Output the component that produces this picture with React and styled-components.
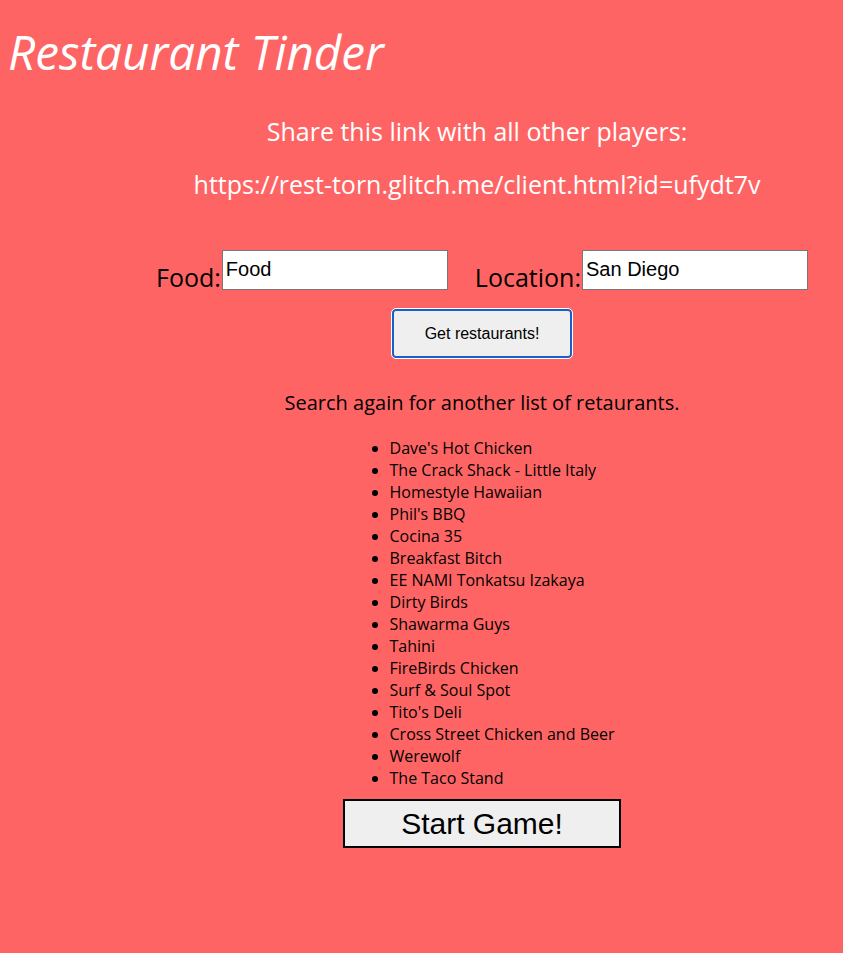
import styled, { createGlobalStyle } from "styled-components";

const GlobalStyle = createGlobalStyle`
  html, body {
    margin: 0;
    background: #ff6464;
  }
  body {
    font-family: "Open Sans", "Noto Sans", sans-serif;
    min-height: 953px;
  }
`;

const Page = styled.div`
  padding: 0 0 40px 8px;
`;

const Title = styled.h1`
  margin: 0;
  padding-top: 22px;
  font-size: 47.6px;
  font-style: italic;
  font-weight: 400;
  line-height: 60px;
  color: #fff;
`;

const Main = styled.main`
  margin-left: 113px;
  display: flex;
  flex-direction: column;
  align-items: center;
`;

const ShareText = styled.p`
  margin: 0;
  font-size: 25px;
  line-height: 30px;
  color: #fff;
  transform: translateX(-5px);
  margin-top: ${(p) => p.$top}px;
`;

const SearchRow = styled.div`
  display: flex;
  align-items: flex-end;
  gap: 27px;
  margin-top: 51px;
`;

const Field = styled.label`
  display: flex;
  align-items: flex-end;
  font-size: 25px;
  line-height: 30px;
  color: #000;
`;

const LabelText = styled.span`
  margin-bottom: -2px;
`;

const Input = styled.input`
  box-sizing: border-box;
  width: 226px;
  height: 40px;
  margin: 0 0 0 1px;
  padding: 0 3px 1px;
  border: 1px solid #777;
  background: #fff;
  font-family: "Liberation Sans", Arial, sans-serif;
  font-size: 20px;
  color: #000;
`;

const GetButton = styled.button`
  box-sizing: border-box;
  width: 180px;
  height: 49px;
  margin-top: 19px;
  border: 2px solid #1a5fc9;
  border-radius: 4px;
  outline: 1px solid #fff;
  background: #efefef;
  font-family: "Liberation Sans", Arial, sans-serif;
  font-size: 16px;
  color: #000;
`;

const Notice = styled.p`
  margin: 32px 0 0;
  font-size: 20px;
  line-height: 26px;
  color: #000;
`;

const List = styled.ul`
  margin: 21px 0 0;
  padding-left: 40px;
  text-align: left;
  font-size: 16px;
  line-height: 22px;
  color: #000;
`;

const Item = styled.li`
  padding-left: 0;
`;

const StartButton = styled.button`
  box-sizing: border-box;
  width: 278px;
  height: 49px;
  margin-top: 10px;
  border: 2px solid #000;
  background: #efefef;
  font-family: "Liberation Sans", Arial, sans-serif;
  font-size: 30px;
  color: #000;
`;

const restaurants = [
  "Dave's Hot Chicken",
  "The Crack Shack - Little Italy",
  "Homestyle Hawaiian",
  "Phil's BBQ",
  "Cocina 35",
  "Breakfast Bitch",
  "EE NAMI Tonkatsu Izakaya",
  "Dirty Birds",
  "Shawarma Guys",
  "Tahini",
  "FireBirds Chicken",
  "Surf & Soul Spot",
  "Tito's Deli",
  "Cross Street Chicken and Beer",
  "Werewolf",
  "The Taco Stand",
];

const App = () => {
  return (
    <Page>
      <GlobalStyle />
      <Title>Restaurant Tinder</Title>
      <Main>
        <ShareText $top={34}>Share this link with all other players:</ShareText>
        <ShareText $top={23}>https://rest-torn.glitch.me/client.html?id=ufydt7v</ShareText>
        <SearchRow>
          <Field>
            <LabelText>Food:</LabelText>
            <Input defaultValue="Food" />
          </Field>
          <Field>
            <LabelText>Location:</LabelText>
            <Input defaultValue="San Diego" />
          </Field>
        </SearchRow>
        <GetButton>Get restaurants!</GetButton>
        <Notice>Search again for another list of retaurants.</Notice>
        <List>
          {restaurants.map((name) => (
            <Item key={name}>{name}</Item>
          ))}
        </List>
        <StartButton>Start Game!</StartButton>
      </Main>
    </Page>
  );
};

export default App;
